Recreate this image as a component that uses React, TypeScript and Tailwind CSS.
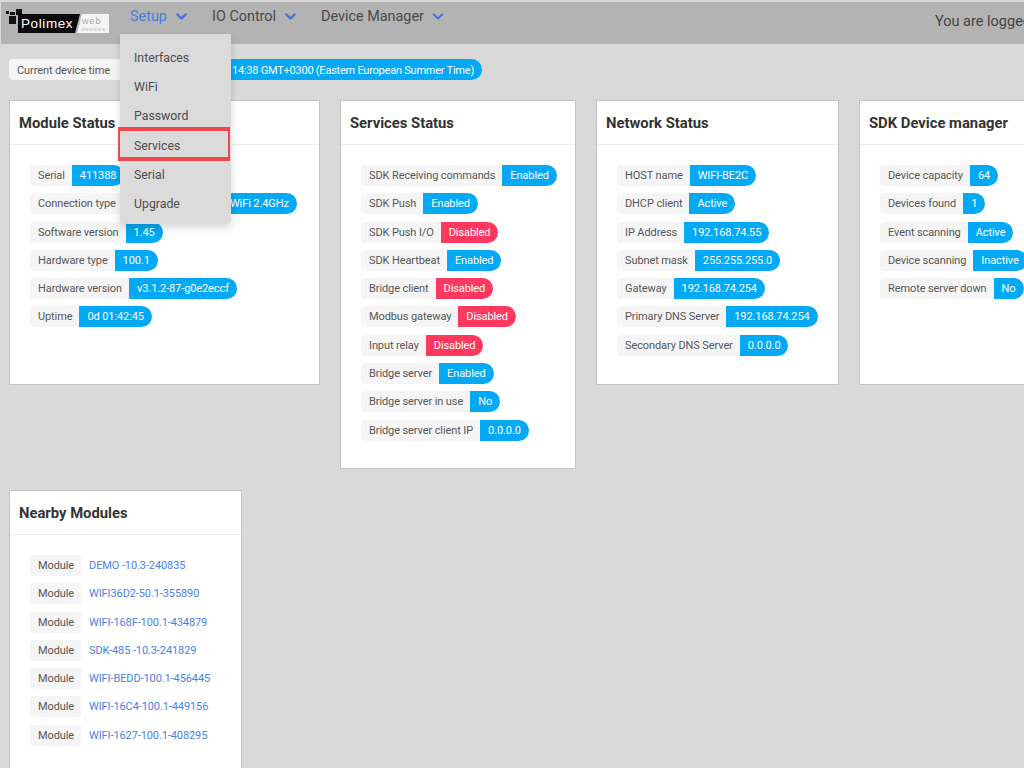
import { ChevronDown } from "lucide-react";

type Row = { label: string; value: string; off?: boolean; valueClass?: string };

const moduleRows: Row[] = [
  { label: "Serial", value: "411388" },
  // the start of this value sits under the open menu in the picture
  { label: "Connection type", value: "WiFi 2.4GHz", valueClass: "w-[174px] text-right" },
  { label: "Software version", value: "1.45" },
  { label: "Hardware type", value: "100.1" },
  { label: "Hardware version", value: "v3.1.2-87-g0e2eccf" },
  { label: "Uptime", value: "0d 01:42:45" },
];

const serviceRows: Row[] = [
  { label: "SDK Receiving commands", value: "Enabled" },
  { label: "SDK Push", value: "Enabled" },
  { label: "SDK Push I/O", value: "Disabled", off: true },
  { label: "SDK Heartbeat", value: "Enabled" },
  { label: "Bridge client", value: "Disabled", off: true },
  { label: "Modbus gateway", value: "Disabled", off: true },
  { label: "Input relay", value: "Disabled", off: true },
  { label: "Bridge server", value: "Enabled" },
  { label: "Bridge server in use", value: "No" },
  { label: "Bridge server client IP", value: "0.0.0.0" },
];

const networkRows: Row[] = [
  { label: "HOST name", value: "WIFI-BE2C" },
  { label: "DHCP client", value: "Active" },
  { label: "IP Address", value: "192.168.74.55" },
  { label: "Subnet mask", value: "255.255.255.0" },
  { label: "Gateway", value: "192.168.74.254" },
  { label: "Primary DNS Server", value: "192.168.74.254" },
  { label: "Secondary DNS Server", value: "0.0.0.0" },
];

const sdkRows: Row[] = [
  { label: "Device capacity", value: "64" },
  { label: "Devices found", value: "1" },
  { label: "Event scanning", value: "Active" },
  { label: "Device scanning", value: "Inactive" },
  { label: "Remote server down", value: "No" },
];

const nearby = [
  "DEMO -10.3-240835",
  "WIFI36D2-50.1-355890",
  "WIFI-168F-100.1-434879",
  "SDK-485 -10.3-241829",
  "WIFI-BEDD-100.1-456445",
  "WIFI-16C4-100.1-449156",
  "WIFI-1627-100.1-408295",
];

const menuItems = ["Interfaces", "WiFi", "Password", "Services", "Serial", "Upgrade"];

function Logo() {
  return (
    <div className="relative h-[30px] w-[105px] shrink-0">
      <svg width="105" height="30" viewBox="0 0 105 30" className="absolute inset-0">
        <rect x="2" y="3" width="3" height="3" fill="#111" />
        <rect x="6" y="4" width="5" height="3" fill="#111" />
        <rect x="12" y="1" width="6" height="6" fill="#111" />
        <rect x="5" y="8" width="7" height="8" fill="#111" />
        <polygon points="14,6 76,6 71,25 14,25" fill="#0a0a0a" />
        <polygon points="78,6 105,6 105,25 73,25" fill="#f4f4f4" />
      </svg>
      <span className="absolute left-[17px] top-[8px] font-['Liberation_Sans',sans-serif] text-[13.5px] leading-4 tracking-[0.6px] text-white">
        Polimex
      </span>
      <span className="absolute left-[78px] top-[8px] font-['Liberation_Sans',sans-serif] text-[9px] leading-[10px] tracking-[1px] text-[#a8a8a8]">
        web
      </span>
      <span className="absolute left-[77px] top-[17px] font-['Liberation_Sans',sans-serif] text-[6px] leading-[8px] tracking-[0.6px] text-[#c0c0c0]">
        devices
      </span>
    </div>
  );
}

function NavItem({ label, active, className }: { label: string; active?: boolean; className: string }) {
  return (
    <div className={`flex items-center whitespace-nowrap text-[14.4px] ${className} ${active ? "text-[#4a7fe0]" : "text-[#4a4a4a]"}`}>
      <span>{label}</span>
      <ChevronDown size={17} strokeWidth={3} className="ml-[6px] text-[#3f78d8]" />
    </div>
  );
}

function Tag({ row }: { row: Row }) {
  return (
    <div className="flex h-[21px] items-stretch whitespace-nowrap text-[11px] leading-[22px] tracking-[-0.1px]">
      <span className="rounded-l-[4px] bg-[#f5f5f5] pl-2 pr-[7px] text-[#555]">{row.label}</span>
      <span className={`rounded-r-full px-2 text-white ${row.off ? "bg-[#ff3860]" : "bg-[#03a9f4]"} ${row.valueClass ?? ""}`}>
        {row.value}
      </span>
    </div>
  );
}

function CardTitle({ title }: { title: string }) {
  return (
    <h2 className="flex h-[44px] items-center border-b border-[#eeeeee] pl-[9px] pt-px text-[14.8px] font-bold text-[#333]">
      {title}
    </h2>
  );
}

function Card({ title, rows, className }: { title: string; rows: Row[]; className: string }) {
  return (
    <section className={`shrink-0 border border-[#c4c4c4] bg-white ${className}`}>
      <CardTitle title={title} />
      <div className="flex flex-col gap-[7.3px] pl-[20px] pt-[20px]">
        {rows.map((row) => (
          <Tag key={row.label} row={row} />
        ))}
      </div>
    </section>
  );
}

export default function App() {
  return (
    <div className="relative h-[768px] w-[1024px] overflow-hidden bg-[#d9d9d9] font-['Roboto',sans-serif]">
      <header className="ml-px mt-[2px] flex h-[42px] items-center bg-[#b3b3b3] pl-[3px]">
        <Logo />
        <nav className="mb-[13px] ml-[21px] flex">
          <NavItem label="Setup" active className="w-[82px]" />
          <NavItem label="IO Control" className="w-[109px]" />
          <NavItem label="Device Manager" className="w-[125px]" />
        </nav>
        <span className="absolute left-[935px] top-[11px] whitespace-nowrap text-[14.5px] text-[#444]">You are logged in</span>
      </header>

      <div className="ml-[9px] mt-[15px] flex h-[21px] whitespace-nowrap text-[11px] leading-[23px] tracking-[-0.23px]">
        <span className="w-[111px] rounded-l-[4px] bg-[#f5f5f5] px-2 tracking-[-0.1px] text-[#555]">Current device time</span>
        <span className="flex w-[362px] justify-end rounded-r-full bg-[#03a9f4] pr-2 text-white">
          14:38 GMT+0300 (Eastern European Summer Time)
        </span>
      </div>

      <div className="ml-[9px] mt-[20px] flex items-start gap-[20px]">
        <Card title="Module Status" rows={moduleRows} className="h-[285px] w-[311px]" />
        <Card title="Services Status" rows={serviceRows} className="h-[369px] w-[236px]" />
        <Card title="Network Status" rows={networkRows} className="h-[285px] w-[243px]" />
        <Card title="SDK Device manager" rows={sdkRows} className="h-[285px] w-[243px]" />
      </div>

      <section className="absolute left-[9px] top-[490px] h-[300px] w-[233px] border border-[#c4c4c4] bg-white">
        <CardTitle title="Nearby Modules" />
        <div className="flex flex-col gap-[7.3px] pl-[20px] pt-[20px]">
          {nearby.map((name) => (
            <div key={name} className="flex h-[21px] whitespace-nowrap text-[11px] leading-[22px] tracking-[-0.1px]">
              <span className="rounded-l-[4px] bg-[#f5f5f5] pl-2 pr-[7px] text-[#555]">Module</span>
              <a className="px-2 text-[#4a7fe8]">{name}</a>
            </div>
          ))}
        </div>
      </section>

      <div className="absolute left-[120px] top-[34px] h-[190px] w-[111px] rounded-b-[4px] bg-[#dbdbdb] pt-[10px] shadow-[0_4px_8px_rgba(0,0,0,0.15)]">
        {menuItems.map((item) => (
          <div key={item} className="h-[29.2px] pl-[14px] text-[12.3px] leading-[29px] text-[#4d4d4d]">
            {item}
          </div>
        ))}
      </div>
      <div className="absolute left-[118px] top-[127px] h-[34px] w-[112px] border-x-2 border-y-[4px] border-[#f04848] blur-[0.7px]" />
    </div>
  );
}
